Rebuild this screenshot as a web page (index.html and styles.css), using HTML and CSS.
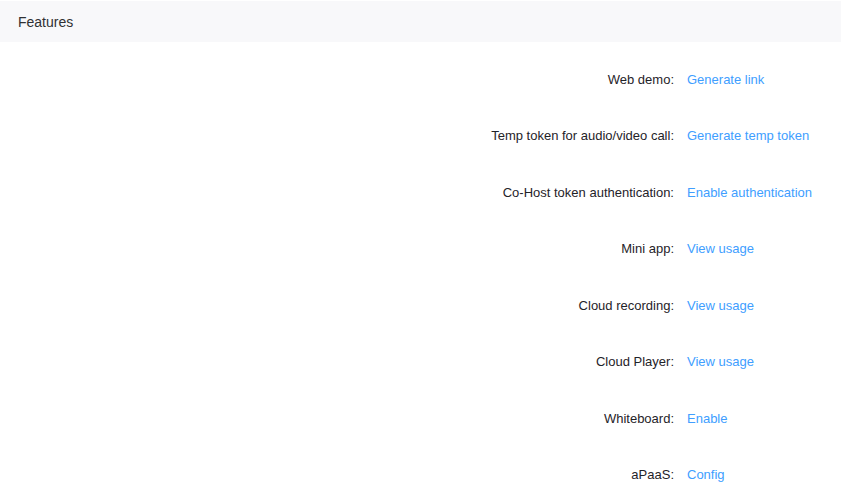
FILE: index.html
```html
<!DOCTYPE html>
<html>
<head>
<meta charset="utf-8">
<link rel="stylesheet" href="styles.css">
</head>
<body>
<div class="card">
  <div class="card-header">Features</div>
  <div class="card-body">
    <div class="row"><div class="label">Web demo:</div><a class="link">Generate link</a></div>
    <div class="row"><div class="label">Temp token for audio/video call:</div><a class="link">Generate temp token</a></div>
    <div class="row"><div class="label">Co-Host token authentication:</div><a class="link">Enable authentication</a></div>
    <div class="row"><div class="label">Mini app:</div><a class="link">View usage</a></div>
    <div class="row"><div class="label">Cloud recording:</div><a class="link">View usage</a></div>
    <div class="row"><div class="label">Cloud Player:</div><a class="link">View usage</a></div>
    <div class="row"><div class="label">Whiteboard:</div><a class="link">Enable</a></div>
    <div class="row"><div class="label">aPaaS:</div><a class="link">Config</a></div>
  </div>
</div>
</body>
</html>
```
FILE: styles.css
```css
html, body {
  margin: 0;
  padding: 0;
  background: #ffffff;
  font-family: "Liberation Sans", Arial, sans-serif;
}
.card {
  padding-top: 1px;
}
.card-header {
  height: 40px;
  padding-top: 1px;
  line-height: 40px;
  background: #f8f8fa;
  padding-left: 18px;
  font-size: 14px;
  color: #303133;
}
.card-body {
  padding-top: 18px;
}
.row {
  display: flex;
  height: 40px;
  line-height: 40px;
  margin-bottom: 16.43px;
  font-size: 13px;
}
.label {
  width: 687px;
  box-sizing: border-box;
  padding-right: 13px;
  text-align: right;
  color: #1f2329;
}
.link {
  color: #409eff;
  cursor: pointer;
}
```
